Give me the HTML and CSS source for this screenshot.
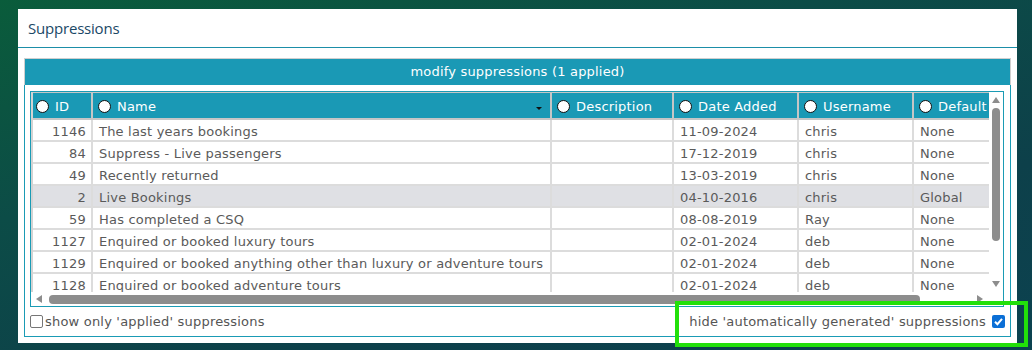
FILE: index.html
```html
<!DOCTYPE html>
<html lang="en">
<head>
    <meta charset="UTF-8">
    <title>Suppressions</title>
    <link rel="stylesheet" href="styles.css">
</head>
<body>
    <div class="page">
        <div class="panel">
            <div class="panel-head">Suppressions</div>
            <div class="panel-body">
                <div class="frame">
                    <div class="frame-title">modify suppressions (1 applied)</div>
                    <div class="frame-body">
                        <div class="grid-box">
                            <div class="grid-view">
                                <table class="grid">
                                    <thead>
                                        <tr>
                                            <th class="c-id"><span class="radio"></span>ID</th>
                                            <th class="c-name"><span class="radio"></span>Name<span class="sort-caret"></span></th>
                                            <th class="c-desc"><span class="radio"></span>Description</th>
                                            <th class="c-date"><span class="radio"></span>Date Added</th>
                                            <th class="c-user"><span class="radio"></span>Username</th>
                                            <th class="c-def"><span class="radio"></span>Default</th>
                                        </tr>
                                    </thead>
                                    <tbody>
                                        <tr><td class="num">1146</td><td>The last years bookings</td><td></td><td>11-09-2024</td><td>chris</td><td>None</td></tr>
                                        <tr><td class="num">84</td><td>Suppress - Live passengers</td><td></td><td>17-12-2019</td><td>chris</td><td>None</td></tr>
                                        <tr><td class="num">49</td><td>Recently returned</td><td></td><td>13-03-2019</td><td>chris</td><td>None</td></tr>
                                        <tr class="applied"><td class="num">2</td><td>Live Bookings</td><td></td><td>04-10-2016</td><td>chris</td><td>Global</td></tr>
                                        <tr><td class="num">59</td><td>Has completed a CSQ</td><td></td><td>08-08-2019</td><td>Ray</td><td>None</td></tr>
                                        <tr><td class="num">1127</td><td>Enquired or booked luxury tours</td><td></td><td>02-01-2024</td><td>deb</td><td>None</td></tr>
                                        <tr><td class="num">1129</td><td>Enquired or booked anything other than luxury or adventure tours</td><td></td><td>02-01-2024</td><td>deb</td><td>None</td></tr>
                                        <tr><td class="num">1128</td><td>Enquired or booked adventure tours</td><td></td><td>02-01-2024</td><td>deb</td><td>None</td></tr>
                                    </tbody>
                                </table>
                            </div>
                            <div class="vscroll">
                                <span class="arrow-up"></span>
                                <span class="vthumb"></span>
                                <span class="fill"></span>
                                <span class="arrow-down"></span>
                            </div>
                            <div class="hscroll">
                                <span class="arrow-left"></span>
                                <span class="hthumb"></span>
                                <span class="fill"></span>
                                <span class="arrow-right"></span>
                            </div>
                            <div class="corner"></div>
                        </div>
                        <div class="options">
                            <label class="opt"><span class="check"></span>show only 'applied' suppressions</label>
                            <label class="opt opt-right">hide 'automatically generated' suppressions<span class="check checked"><svg width="13" height="13" viewBox="0 0 13 13"><path d="M3 6.8 L5.4 9.2 L10 3.8" fill="none" stroke="#fff" stroke-width="2"/></svg></span></label>
                        </div>
                    </div>
                </div>
            </div>
        </div>
        <div class="highlight"></div>
    </div>
</body>
</html>
```

FILE: styles.css
```css
html, body {
    margin: 0;
    padding: 0;
}
body {
    width: 1032px;
    height: 350px;
    overflow: hidden;
    font-family: "DejaVu Sans", Verdana, sans-serif;
    font-size: 13px;
    letter-spacing: 0.2px;
}
.page {
    position: relative;
    height: 350px;
    box-sizing: border-box;
    padding: 9px 0 0 18px;
    background: linear-gradient(165deg, #0a5c3b 0%, #0c4c47 35%, #0d404a 70%, #0c4250 100%);
}
.panel {
    width: 999px;
    background-color: #fff;
    padding-bottom: 6px;
}
.panel-head {
    height: 38px;
    line-height: 38px;
    padding-left: 10px;
    border-bottom: 1px solid #1b8ea8;
    font-family: "Open Sans", sans-serif;
    font-size: 15px;
    font-weight: 500;
    letter-spacing: -0.2px;
    color: #1a4866;
}
.panel-body {
    padding: 10px 6px 0;
}
.frame-title {
    height: 27px;
    box-sizing: border-box;
    border: 1px solid #cfcfcf;
    border-bottom: none;
    line-height: 26px;
    background-color: #1a99b5;
    color: #fff;
    text-align: center;
}
.frame-body {
    border: 1px solid #1a9bb5;
    border-top: none;
    padding: 6px 6px 0 5px;
}
.grid-box {
    display: grid;
    grid-template-columns: 958px 14px;
    grid-template-rows: 200px 14px;
    border: 1px solid #1a9bb5;
}
.grid-view {
    overflow: hidden;
}
.grid {
    table-layout: fixed;
    width: 998px;
    border-collapse: separate;
    border-spacing: 0;
    border-left: 2px solid #d3d3d3;
    color: #5a5a5a;
}
.grid th,
.grid td {
    box-sizing: border-box;
    border-right: 2px solid #dcdcdc;
    border-bottom: 2px solid #dcdcdc;
    white-space: nowrap;
    overflow: hidden;
    text-align: left;
    padding: 2px 0 0 6px;
}
.grid th {
    height: 28px;
    border-top: 1px solid #c6c6c6;
    border-right-color: #c6c6c6;
    border-bottom-color: #c6c6c6;
    background-color: #1a99b5;
    color: #fff;
    font-weight: normal;
    padding: 2px 0 0 5px;
    position: relative;
}
.grid td {
    height: 22px;
}
.grid .c-id { width: 60px; padding-left: 3px; }
.grid .c-name { width: 459px; }
.grid .c-desc { width: 122px; }
.grid .c-date { width: 125px; }
.grid .c-user { width: 115px; }
.grid .c-def { width: 117px; }
.grid td.num {
    text-align: right;
    padding: 2px 5px 0 0;
}
.grid tr.applied td {
    background-color: #dfe0e4;
}
.radio {
    display: inline-block;
    width: 13px;
    height: 13px;
    box-sizing: border-box;
    border: 1.5px solid #111;
    border-radius: 50%;
    background-color: #fff;
    vertical-align: -2px;
    margin-right: 6px;
}
.sort-caret {
    position: absolute;
    right: 8px;
    top: 14px;
    border-left: 3px solid transparent;
    border-right: 3px solid transparent;
    border-top: 3px solid #111;
}
.vscroll {
    display: flex;
    flex-direction: column;
    align-items: center;
    padding: 5px 0;
    background-color: #fff;
}
.hscroll {
    display: flex;
    align-items: center;
    padding: 0 6px 0 5px;
    background-color: #fff;
}
.fill {
    flex: 1;
}
.arrow-up {
    border-left: 4px solid transparent;
    border-right: 4px solid transparent;
    border-bottom: 6px solid #8d8d8d;
}
.arrow-down {
    border-left: 4px solid transparent;
    border-right: 4px solid transparent;
    border-top: 6px solid #8d8d8d;
}
.arrow-left {
    border-top: 4px solid transparent;
    border-bottom: 4px solid transparent;
    border-right: 6px solid #8d8d8d;
}
.arrow-right {
    border-top: 4px solid transparent;
    border-bottom: 4px solid transparent;
    border-left: 6px solid #8d8d8d;
}
.vthumb {
    width: 8px;
    height: 133px;
    margin-top: 5px;
    border-radius: 4px;
    background-color: #8d8d8d;
}
.hthumb {
    width: 871px;
    height: 9px;
    margin-left: 7px;
    border-radius: 4px;
    background-color: #8d8d8d;
}
.corner {
    background-color: #fff;
}
.options {
    display: flex;
    justify-content: space-between;
    align-items: center;
    height: 29px;
    color: #555;
}
.opt {
    display: flex;
    align-items: center;
}
.opt-right {
    margin-right: -1px;
}
.check {
    display: inline-block;
    width: 13px;
    height: 13px;
    box-sizing: border-box;
    border: 1px solid #767676;
    border-radius: 2px;
    background-color: #fff;
    margin-right: 2px;
}
.check.checked {
    border: none;
    background-color: #0b6fd6;
    margin: 0 0 0 6px;
}
.check svg {
    display: block;
}
.highlight {
    position: absolute;
    left: 675px;
    top: 301px;
    width: 353px;
    height: 46px;
    box-sizing: border-box;
    border: 4px solid #22e00a;
}
```
